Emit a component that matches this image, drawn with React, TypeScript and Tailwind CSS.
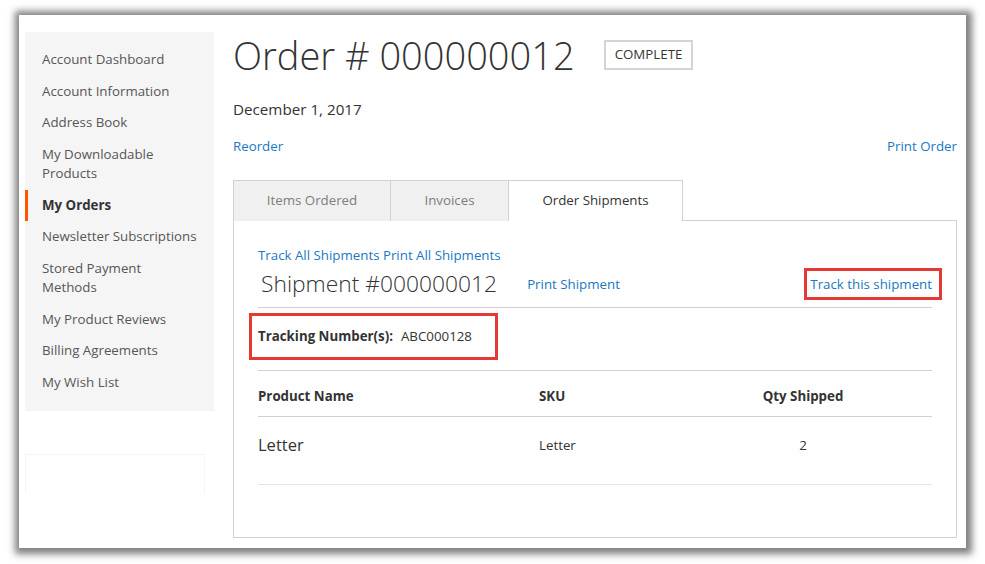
import React from "react";

const font = { fontFamily: '"Open Sans", "Noto Sans", sans-serif' };

const items: { label: string[]; active?: boolean }[] = [
  { label: ["Account Dashboard"] },
  { label: ["Account Information"] },
  { label: ["Address Book"] },
  { label: ["My Downloadable", "Products"] },
  { label: ["My Orders"], active: true },
  { label: ["Newsletter Subscriptions"] },
  { label: ["Stored Payment", "Methods"] },
  { label: ["My Product Reviews"] },
  { label: ["Billing Agreements"] },
  { label: ["My Wish List"] },
];

export default function App() {
  return (
    <div className="w-[985px] h-[564px] bg-white overflow-hidden pt-[15px] pl-[19px]" style={font}>
      <div className="w-[947px] h-[533px] bg-white shadow-[1px_1px_7px_5px_rgba(0,0,0,0.5)] flex pl-[6px] pt-[17px] pr-[9px]">
        {/* Sidebar */}
        <div className="w-[189px] flex flex-col shrink-0">
          <div className="bg-[#f5f5f5] pt-[12px] pb-[13px]">
            {items.map((it, i) => (
              <div
                key={i}
                className={
                  "py-[6px] pl-[14px] pr-2 text-[13.3px] leading-[19.5px] border-l-[3px] whitespace-nowrap " +
                  (it.active
                    ? "border-[#ff5501] text-[#333333] font-bold"
                    : "border-transparent text-[#575757]")
                }
              >
                {it.label.map((l, j) => (
                  <div key={j}>{l}</div>
                ))}
              </div>
            ))}
          </div>
          <div className="mt-[43px] w-[180px] h-[40px] border border-[#f5f5f5] border-b-0"></div>
        </div>

        {/* Main */}
        <div className="flex-1 ml-[19px] text-[#333333]">
          <div className="flex items-center h-[46px]">
            <h1 className="text-[38px] font-light leading-[46px] text-[#333333]">Order # 000000012</h1>
            <span className="ml-[29px] border-2 border-[#d4d4d4] h-[30px] px-[9px] flex items-center text-[13.3px] uppercase text-[#333333]">
              Complete
            </span>
          </div>
          <div className="mt-[19px] text-[15.2px] leading-[24px]">December 1, 2017</div>
          <div className="mt-[15px] flex justify-between text-[13.3px] leading-[20px] text-[#1979c3]">
            <span>Reorder</span>
            <span>Print Order</span>
          </div>

          {/* Tabs */}
          <div className="mt-[24px] flex h-[41px] text-[13.3px]">
            <div className="w-[158px] bg-[#f0f0f0] border border-[#d1d1d1] border-b-0 flex items-center justify-center text-[#7d7d7d]">
              Items Ordered
            </div>
            <div className="w-[118px] bg-[#f0f0f0] border border-[#d1d1d1] border-l-0 border-b-0 flex items-center justify-center text-[#7d7d7d]">
              Invoices
            </div>
            <div className="w-[174px] bg-white border border-[#d1d1d1] border-l-0 border-b-0 flex items-center justify-center text-[#333333]">
              Order Shipments
            </div>
            <div className="flex-1 border-b border-[#d1d1d1]"></div>
          </div>

          {/* Panel */}
          <div className="h-[317px] border border-t-0 border-[#d1d1d1] px-[24px] pt-[24px]">
            <div className="text-[13.3px] leading-[20px] text-[#1979c3]">Track All Shipments Print All Shipments</div>
            <div className="mt-[3px] flex items-center h-[32px]">
              <span className="text-[22.8px] font-light leading-[32px] ml-[3px] text-[#333333]">Shipment #000000012</span>
              <span className="ml-[30px] pt-[2px] text-[13.3px] text-[#1979c3]">Print Shipment</span>
              <span className="ml-auto -mr-[10px] h-[32px] pt-[2px] flex items-center border-[3px] border-[#e53935] pl-[3px] pr-[7px] text-[13.3px] text-[#1979c3]">
                Track this shipment
              </span>
            </div>
            <div className="mt-[7px] border-t border-[#d1d1d1]"></div>
            <div className="mt-[5px] -ml-[9px] w-[249px] h-[47px] border-[3px] border-[#e53935] flex items-center pl-[6px] text-[13.3px]">
              <span className="font-bold">Tracking Number(s):</span>
              <span className="ml-[8px]">ABC000128</span>
            </div>
            <div className="mt-[10px] border-t border-[#d1d1d1]"></div>
            <div className="grid grid-cols-[281px_135px_1fr] h-[46px] pt-[6px] items-center text-[13.3px] font-bold border-b border-[#d1d1d1]">
              <span>Product Name</span>
              <span>SKU</span>
              <span className="text-center">Qty Shipped</span>
            </div>
            <div className="grid grid-cols-[281px_135px_1fr] h-[68px] pb-[10px] items-center border-b border-[#e4e4e4]">
              <span className="text-[16.5px]">Letter</span>
              <span className="text-[13.3px]">Letter</span>
              <span className="text-[13.3px] text-center">2</span>
            </div>
          </div>
        </div>
      </div>
    </div>
  );
}
